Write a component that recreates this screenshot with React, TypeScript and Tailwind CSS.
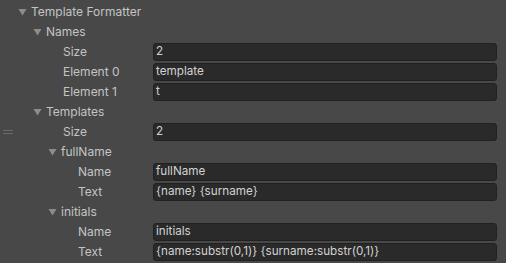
import React from 'react';

type Row =
  | { kind: 'fold'; label: string; x: number; handle?: boolean }
  | { kind: 'field'; label: string; x: number; value: string; handle?: boolean };

const ROWS: Row[] = [
  { kind: 'fold', label: 'Template Formatter', x: 18 },
  { kind: 'fold', label: 'Names', x: 33 },
  { kind: 'field', label: 'Size', x: 63, value: '2' },
  { kind: 'field', label: 'Element 0', x: 63, value: 'template' },
  { kind: 'field', label: 'Element 1', x: 63, value: 't' },
  { kind: 'fold', label: 'Templates', x: 33 },
  { kind: 'field', label: 'Size', x: 63, value: '2', handle: true },
  { kind: 'fold', label: 'fullName', x: 48 },
  { kind: 'field', label: 'Name', x: 78, value: 'fullName' },
  { kind: 'field', label: 'Text', x: 78, value: '{name} {surname}' },
  { kind: 'fold', label: 'initials', x: 48 },
  { kind: 'field', label: 'Name', x: 78, value: 'initials' },
  { kind: 'field', label: 'Text', x: 78, value: '{name:substr(0,1)} {surname:substr(0,1)}' },
];

const Arrow = () => (
  <svg width="9" height="8" viewBox="0 0 9 8" className="shrink-0">
    <path d="M0.5 1 L8.5 1 L4.5 7.5 Z" fill="#8c8c8c" />
  </svg>
);

const Handle = () => (
  <div className="absolute left-[3px] top-[8px] flex flex-col gap-[2px]">
    <div className="h-px w-[10px] bg-[#6a6a6a]" />
    <div className="h-px w-[10px] bg-[#6a6a6a]" />
  </div>
);

export default function App() {
  return (
    <div
      className="w-[506px] h-[263px] bg-[#484848] pt-[2px] overflow-hidden text-[12px] text-[#c4c4c4]"
      style={{ fontFamily: 'Inter, "Noto Sans", sans-serif' }}
    >
      {ROWS.map((row, i) => (
        <div key={i} className="relative flex h-[20px] items-center">
          {row.handle && <Handle />}
          {row.kind === 'fold' ? (
            <div className="flex items-center gap-[4px]" style={{ paddingLeft: row.x }}>
              <Arrow />
              <span>{row.label}</span>
            </div>
          ) : (
            <>
              <span className="w-[153px] shrink-0" style={{ paddingLeft: row.x }}>
                {row.label}
              </span>
              <div className="flex h-[18px] w-[344px] items-center rounded-[3px] border border-[#212121] bg-[#2a2a2a] px-[2px] text-[11.7px] text-[#d2d2d2]">
                {row.value}
              </div>
            </>
          )}
        </div>
      ))}
    </div>
  );
}
